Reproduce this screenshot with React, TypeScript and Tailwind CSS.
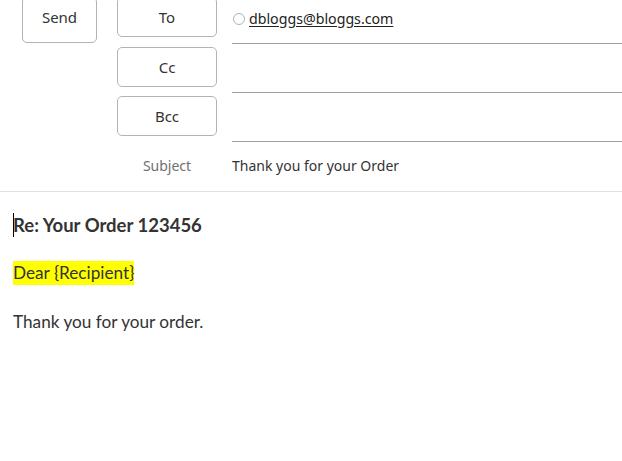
import React from "react";

const ui = { fontFamily: '"Noto Sans", "Open Sans", sans-serif' };
const body = { fontFamily: 'Lato, "Noto Sans", sans-serif' };

function FieldButton({ label }: { label: string }) {
  return (
    <button
      className="w-[100px] h-[40px] rounded-[5px] border border-[#b3b3b3] bg-white text-[15px] text-[#333] flex items-center justify-center pt-[1px]"
      style={ui}
    >
      {label}
    </button>
  );
}

export default function App() {
  return (
    <div className="w-[622px] h-[461px] bg-white overflow-hidden relative">
      <div className="flex mt-[-5px]">
        <div className="pl-[22px] pt-[2px] w-[117px] shrink-0">
          <button
            className="w-[75px] h-[46px] rounded-[5px] border border-[#b3b3b3] bg-white text-[15px] text-[#333] flex items-center justify-center pb-[5px]"
            style={ui}
          >
            Send
          </button>
        </div>
        <div className="flex-1 flex flex-col">
          <div className="flex h-[49px]">
            <div className="pt-[2px]">
              <FieldButton label="To" />
            </div>
            <div className="flex-1 ml-[15px] border-b border-[#a0a0a0] flex items-start pt-[17px]">
              <span className="w-[12px] h-[12px] rounded-full border border-[#aab4bd] ml-[1px] mt-[1px] shrink-0" />
              <span className="ml-[4px] text-[14.2px] leading-[14px] text-[#222] underline underline-offset-[2px]" style={ui}>
                dbloggs@bloggs.com
              </span>
            </div>
          </div>
          <div className="flex h-[49px]">
            <div className="pt-[3px]">
              <FieldButton label="Cc" />
            </div>
            <div className="flex-1 ml-[15px] border-b border-[#a0a0a0]" />
          </div>
          <div className="flex h-[49px]">
            <div className="pt-[3px]">
              <FieldButton label="Bcc" />
            </div>
            <div className="flex-1 ml-[15px] border-b border-[#a0a0a0]" />
          </div>
        </div>
      </div>
      <div className="flex h-[50px] border-b border-[#e0e0e0] items-center pb-[2px]" style={ui}>
        <div className="w-[117px] shrink-0" />
        <div className="w-[100px] text-center text-[14px] text-[#707070]">Subject</div>
        <div className="ml-[15px] text-[14px] text-[#333]">Thank you for your Order</div>
      </div>
      <div className="pl-[13px] pt-[21px] text-[#333]" style={body}>
        <div className="flex items-center h-[24px]">
          <span className="w-px h-[24px] bg-black -mr-px" />
          <span className="text-[18.5px] font-bold leading-[24px]">Re: Your Order 123456</span>
        </div>
        <div className="mt-[24px] h-[24px] flex">
          <span className="bg-[#ffff00] text-[17.2px] leading-[24px]">Dear {"{Recipient}"}</span>
        </div>
        <div className="mt-[25px] h-[24px] text-[17.2px] leading-[24px]">Thank you for your order.</div>
      </div>
    </div>
  );
}
